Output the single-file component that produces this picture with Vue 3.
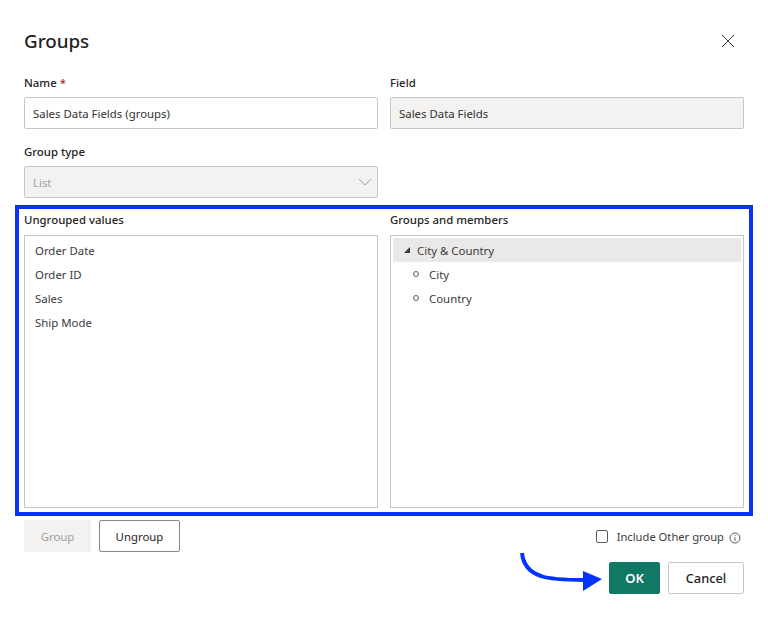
<script setup>
const ungrouped = ['Order Date', 'Order ID', 'Sales', 'Ship Mode']
const members = ['City', 'Country']
</script>

<template>
  <div class="dialog">
    <header class="head">
      <h1>Groups</h1>
      <svg class="close" width="14" height="14" viewBox="0 0 14 14"><path d="M1 1l12 12M13 1L1 13" stroke="#3b3a39" stroke-width="1" fill="none"/></svg>
    </header>

    <div class="grid top">
      <div class="field">
        <label>Name <span class="req">*</span></label>
        <div class="input">Sales Data Fields (groups)</div>
      </div>
      <div class="field">
        <label>Field</label>
        <div class="input off">Sales Data Fields</div>
      </div>
      <div class="field">
        <label>Group type</label>
        <div class="input off sel">
          <span class="sel-text">List</span>
          <svg width="14" height="8" viewBox="0 0 14 8"><path d="M1 1l6 6 6-6" stroke="#a19f9d" stroke-width="1" fill="none"/></svg>
        </div>
      </div>
    </div>

    <section class="hl">
      <div class="col">
        <label>Ungrouped values</label>
        <ul class="list">
          <li v-for="u in ungrouped" :key="u">{{ u }}</li>
        </ul>
      </div>
      <div class="col">
        <label>Groups and members</label>
        <div class="list tree">
          <div class="parent"><i class="tri"></i>City &amp; Country</div>
          <div v-for="m in members" :key="m" class="child"><i class="dot"></i>{{ m }}</div>
        </div>
      </div>
    </section>

    <div class="actions">
      <button class="btn disabled">Group</button>
      <button class="btn ungroup">Ungroup</button>
      <div class="other">
        <span class="check"></span>
        <span class="otext">Include Other group</span>
        <svg class="info" width="12" height="12" viewBox="0 0 12 12"><circle cx="6" cy="6" r="5" fill="none" stroke="#605e5c"/><path d="M6 5v4M6 3v1" stroke="#605e5c"/></svg>
      </div>
    </div>

    <footer class="foot">
      <button class="btn ok">OK</button>
      <button class="btn cancel">Cancel</button>
    </footer>

    <svg class="arrow" width="90" height="46" viewBox="0 0 90 46">
      <path d="M3 0C4 10 10 19 22 23C30 26 50 27 66 27" fill="none" stroke="#0433ff" stroke-width="4"/>
      <path d="M64 18L83 26 64 38z" fill="#0433ff"/>
    </svg>
  </div>
</template>

<style>
body { margin: 0; background: #fff; }
</style>

<style scoped>
.dialog {
  position: relative;
  width: 768px;
  height: 618px;
  box-sizing: border-box;
  padding: 28px 24px 0;
  font-family: "Noto Sans", "Open Sans", sans-serif;
  font-size: 11.4px;
  color: #252423;
  background: #fff;
}
.head { display: flex; justify-content: space-between; align-items: center; height: 26px; }
h1 { margin: 0; font-size: 18.8px; font-weight: 500; line-height: 26px; }
.close { margin-right: 9px; }
.grid { display: grid; grid-template-columns: 354px 354px; column-gap: 12px; }
.top { margin-top: 21px; row-gap: 15px; }
label { display: block; height: 16px; line-height: 16px; font-weight: 500; }
.req { color: #a4262c; }
.field label { margin-bottom: 6px; }
.input {
  box-sizing: border-box;
  height: 32px;
  border: 1px solid #c8c6c4;
  border-radius: 2px;
  padding: 0 8px;
  line-height: 32px;
  color: #323130;
}
.off { background: #f3f2f1; }
.sel { display: flex; justify-content: space-between; align-items: center; color: #a19f9d; padding-right: 5px; }
.sel-text { margin-top: 1px; }
.hl {
  display: grid;
  grid-template-columns: 354px 354px;
  column-gap: 12px;
  box-sizing: border-box;
  width: 738px;
  height: 311px;
  margin: 7px 0 0 -9px;
  padding: 3px 5px 4px;
  border: 4px solid #0433ff;
}
.col { display: flex; flex-direction: column; min-height: 0; }
.col label { margin-bottom: 7px; }
.list {
  flex: 1;
  box-sizing: border-box;
  margin: 0;
  padding: 3px 2px;
  border: 1px solid #c8c6c4;
  list-style: none;
  color: #3b3a39;
}
.tree { padding-top: 2px; }
.list li { height: 24px; line-height: 24px; padding-left: 8px; }
.parent {
  display: flex;
  align-items: center;
  box-sizing: border-box;
  height: 24px;
  padding: 0 0 0 11px;
  background: #ebe9e8;
}
.tri {
  width: 0; height: 0;
  margin-right: 7px;
  border-style: solid;
  border-width: 0 0 6px 6px;
  border-color: transparent transparent #3b3a39 transparent;
}
.child { display: flex; align-items: center; box-sizing: border-box; height: 24px; padding: 0 0 0 20px; }
.dot {
  box-sizing: border-box;
  width: 6px; height: 6px;
  margin-right: 10px;
  border: 1px solid #605e5c;
  border-radius: 50%;
}
.actions { display: flex; align-items: center; gap: 8px; margin-top: 4px; height: 32px; }
.btn {
  box-sizing: border-box;
  height: 32px;
  padding: 0;
  border: 1px solid #8a8886;
  border-radius: 2px;
  background: #fff;
  font: inherit;
  color: #252423;
}
.disabled { width: 67px; background: #f3f2f1; border-color: #f3f2f1; color: #a19f9d; }
.ungroup { width: 81px; }
.other { display: flex; align-items: center; margin-left: auto; }
.check {
  box-sizing: border-box;
  width: 12px; height: 13px;
  margin-right: 9px;
  border: 1px solid #605e5c;
  border-radius: 2px;
}
.otext { color: #3b3a39; font-size: 11.2px; }
.info { margin: 4px 3px 0 5px; }
.foot { display: flex; justify-content: flex-end; gap: 8px; margin-top: 10px; }
.ok {
  width: 51px;
  background: #117865;
  border-color: #117865;
  color: #fff;
  font-size: 13px;
  font-weight: 600;
}
.cancel { width: 76px; border-color: #c8c6c4; font-size: 12.8px; font-weight: 500; }
.arrow { position: absolute; left: 519px; top: 553px; }
</style>
